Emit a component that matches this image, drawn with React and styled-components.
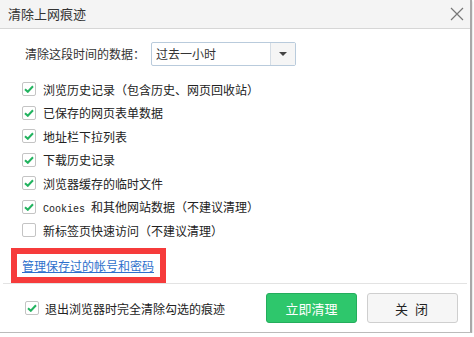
import React from 'react'
import styled, { createGlobalStyle } from 'styled-components';

const GlobalStyle = createGlobalStyle`
  html, body {
    margin: 0;
    padding: 0;
    background: #ffffff;
    overflow: hidden;
  }
  body {
    font-family: "Noto Sans CJK SC", "Microsoft YaHei", sans-serif;
    color: #333;
  }
`;

const Dialog = styled.div`
  width: 472px;
  height: 333px;
  box-sizing: border-box;
  border-right: 2px solid #a8a8a8;
  border-bottom: 1px solid #bbb;
  box-shadow: 0 1px 2px rgba(0, 0, 0, 0.25);
  background: #fff;
  display: flex;
  flex-direction: column;
`;

const TitleBar = styled.div`
  height: 30px;
  box-sizing: border-box;
  background: #f4f4f4;
  border-bottom: 1px solid #d6d6d6;
  display: flex;
  align-items: center;
  justify-content: space-between;
  padding: 0 6px 0 8px;
  font-size: 13px;
  color: #333;
`;

const CloseX = styled.svg`
  width: 14px;
  height: 14px;
`;

const Body = styled.div`
  padding: 13px 0 0 22px;
  flex: 1;
`;

const RangeRow = styled.div`
  display: flex;
  align-items: center;
  gap: 6px;
  padding-left: 3px;
  font-size: 12px;
`;

const Select = styled.div`
  width: 145px;
  height: 24px;
  box-sizing: border-box;
  border: 1px solid #b9cbdc;
  border-radius: 2px;
  display: flex;
  align-items: stretch;
  font-size: 12px;
`;

const SelectText = styled.div`
  flex: 1;
  display: flex;
  align-items: center;
  padding-left: 4px;
`;

const SelectArrow = styled.div`
  width: 24px;
  border-left: 1px solid #d5dde5;
  background: #f5f5f5;
  display: flex;
  align-items: center;
  justify-content: center;
  &::after {
    content: '';
    border-left: 4px solid transparent;
    border-right: 4px solid transparent;
    border-top: 4px solid #444;
  }
`;

const List = styled.div`
  margin-top: 12px;
  display: flex;
  flex-direction: column;
`;

const Row = styled.label`
  height: 23.5px;
  display: flex;
  align-items: center;
  gap: 7px;
  font-size: 12px;
  color: #222;
`;

const Box = styled.span`
  width: 14px;
  height: 14px;
  box-sizing: border-box;
  border: 1px solid #c4c4c4;
  border-radius: 2px;
  background: #fff;
  display: flex;
  align-items: center;
  justify-content: center;
  flex-shrink: 0;
`;

const Mono = styled.span`
  font-family: "Liberation Mono", monospace;
  font-size: 10px;
  margin-right: 6px;
`;

const RedBox = styled.div`
  margin: 6px 0 0 -11px;
  width: 155px;
  height: 35px;
  box-sizing: border-box;
  border: 6px solid #f63b3b;
  display: flex;
  align-items: center;
  padding-left: 5px;
`;

const Link = styled.a`
  font-size: 12px;
  color: #2d6fcc;
  text-decoration: underline;
  cursor: pointer;
`;

const Footer = styled.div`
  margin: 0 3px;
  border-top: 1px solid #e3e3e3;
  height: 50px;
  display: flex;
  align-items: center;
  padding-left: 22px;
  gap: 10px;
`;

const FooterCheck = styled(Row)`
  flex: 1;
  gap: 6px;
`;

const Button = styled.button`
  width: 91px;
  height: 30px;
  box-sizing: border-box;
  border-radius: 3px;
  font-family: inherit;
  font-size: 13px;
  border: 1px solid ${({ $primary }) => ($primary ? '#24ad5c' : '#cfcfcf')};
  background: ${({ $primary }) => ($primary ? '#2ec76c' : '#f6f6f6')};
  color: ${({ $primary }) => ($primary ? '#fff' : '#222')};
  letter-spacing: ${({ $primary }) => ($primary ? '0' : '2px')};
  padding: 0;
  margin-right: ${({ $primary }) => ($primary ? '0' : '9px')};
`;

const Check = ({ checked = true }) => (
  <Box>
    {checked && (
      <svg width="10" height="8" viewBox="0 0 10 8">
        <path d="M1 4.2 L3.8 6.8 L9 1.2" fill="none" stroke="#22b35f" strokeWidth="2" />
      </svg>
    )}
  </Box>
);

const items = [
  { text: '浏览历史记录（包含历史、网页回收站）', checked: true },
  { text: '已保存的网页表单数据', checked: true },
  { text: '地址栏下拉列表', checked: true },
  { text: '下载历史记录', checked: true },
  { text: '浏览器缓存的临时文件', checked: true },
  { text: '和其他网站数据（不建议清理）', checked: true, cookies: true },
  { text: '新标签页快速访问（不建议清理）', checked: false },
];

const App = () => {
  return <>
    <GlobalStyle />
    <Dialog>
      <TitleBar>
        <span>清除上网痕迹</span>
        <CloseX viewBox="0 0 14 14">
          <path d="M1 1 L13 13 M13 1 L1 13" stroke="#777" strokeWidth="1.2" />
        </CloseX>
      </TitleBar>
      <Body>
        <RangeRow>
          <span>清除这段时间的数据：</span>
          <Select>
            <SelectText>过去一小时</SelectText>
            <SelectArrow />
          </Select>
        </RangeRow>
        <List>
          {items.map((it) => (
            <Row key={it.text}>
              <Check checked={it.checked} />
              <span>{it.cookies && <Mono>Cookies</Mono>}{it.text}</span>
            </Row>
          ))}
        </List>
        <RedBox>
          <Link>管理保存过的帐号和密码</Link>
        </RedBox>
      </Body>
      <Footer>
        <FooterCheck>
          <Check />
          <span>退出浏览器时完全清除勾选的痕迹</span>
        </FooterCheck>
        <Button $primary>立即清理</Button>
        <Button>关 闭</Button>
      </Footer>
    </Dialog>
  </>;
}

export default App;
